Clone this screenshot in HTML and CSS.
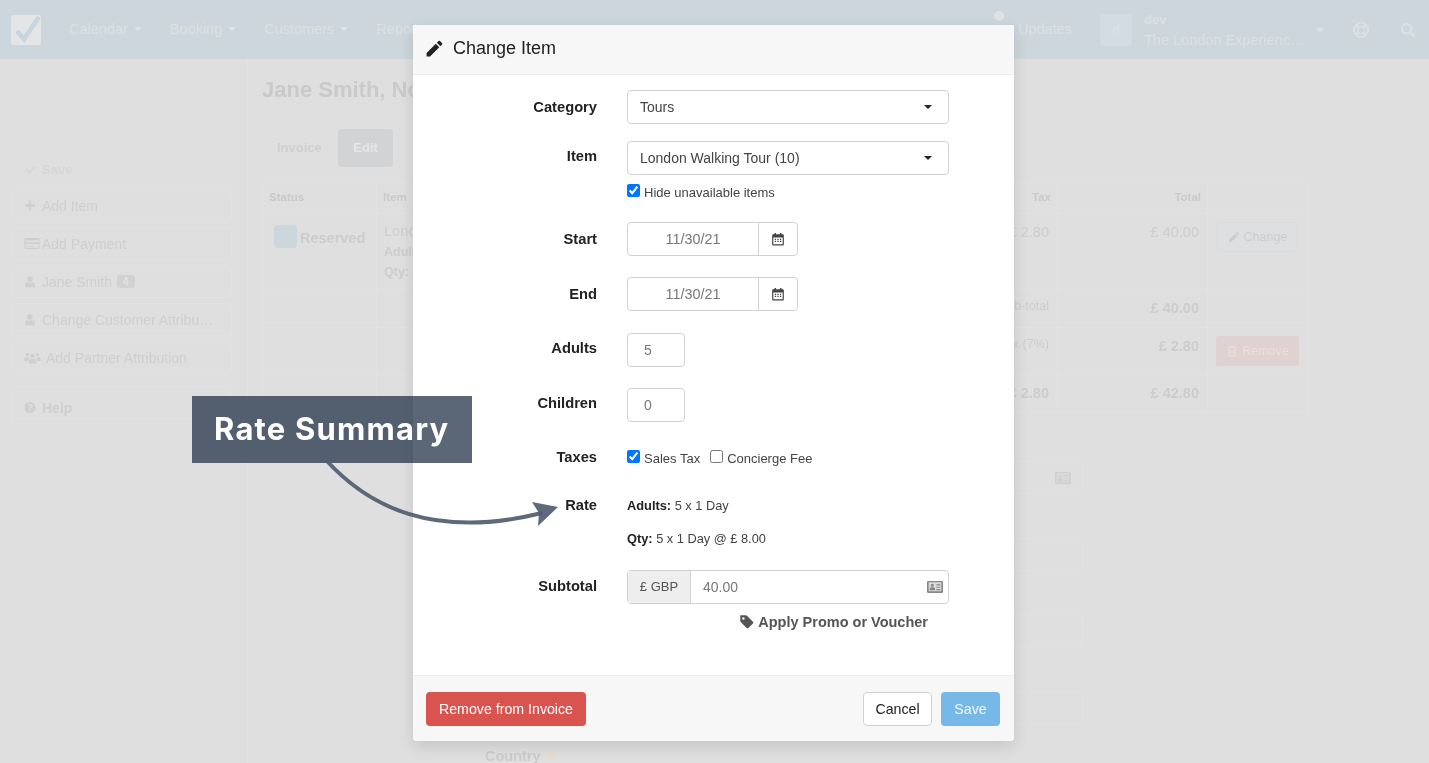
FILE: index.html
```html
<!DOCTYPE html>
<html lang="en">
<head>
    <meta charset="UTF-8">
    <meta name="viewport" content="width=device-width, initial-scale=1.0">
    <title>Change Item</title>
    <link rel="stylesheet" href="styles.css">
</head>
<body>
    <svg class="icon-defs" width="0" height="0">
        <symbol id="i-pencil" viewBox="0 0 24 24"><path d="M2 17.6V22h4.400L18 10.400 13.600 6 2 17.600zM21.500 6.900a1.300 1.300 0 0 0 0-1.800l-2.600-2.600a1.300 1.300 0 0 0-1.800 0L15 4.600 19.400 9l2.100-2.100z"/></symbol>
        <symbol id="i-calendar" viewBox="0 0 24 24"><path d="M6 1.500h2.500V4h7V1.500H18V4h2.500A1.500 1.500 0 0 1 22 5.500v16a1.500 1.500 0 0 1-1.500 1.500h-17A1.500 1.500 0 0 1 2 21.500v-16A1.500 1.500 0 0 1 3.500 4H6zM4 9.500V21h16V9.500zM6.500 11.500h2.200v2H6.500zm4.400 0h2.200v2h-2.200zm4.400 0h2.200v2h-2.200zM6.500 15h2.200v2H6.500zm4.400 0h2.200v2h-2.200zm4.400 0h2.200v2h-2.200z" fill-rule="evenodd"/></symbol>
        <symbol id="i-card" viewBox="0 0 24 20"><rect x="1" y="2" width="22" height="16" fill-opacity="0.3"/><path fill-rule="evenodd" d="M2 1h20a2 2 0 0 1 2 2v14a2 2 0 0 1-2 2H2a2 2 0 0 1-2-2V3a2 2 0 0 1 2-2zm.500 2v13.500h19V3zM8 5a2.300 2.300 0 1 1 0 4.600A2.300 2.300 0 0 1 8 5zM4 15v-2.200C4 11.300 5.500 10.500 8 10.500s4 .8 4 2.300V15zM14 6h6v1.800h-6zm0 3.500h6v1.800h-6zm0 3.500h6v1.800h-6z"/></symbol>
        <symbol id="i-tag" viewBox="0 0 24 24"><path fill-rule="evenodd" d="M2.500 2H11a2.500 2.500 0 0 1 1.800.7l9.500 9.500a2 2 0 0 1 0 2.800l-7.300 7.300a2 2 0 0 1-2.800 0L2.700 12.800A2.500 2.500 0 0 1 2 11V2.500a.5.5 0 0 1 .5-.5zM7 5a2 2 0 1 0 0 4 2 2 0 0 0 0-4z"/></symbol>
        <symbol id="i-check" viewBox="0 0 24 24"><path d="M3 13l3-3 5 5L20 5l3 3-12 12.500z"/></symbol>
        <symbol id="i-plus" viewBox="0 0 24 24"><path d="M9.500 2h5v7.500H22v5h-7.500V22h-5v-7.500H2v-5h7.500z"/></symbol>
        <symbol id="i-payment" viewBox="0 0 28 24"><path fill-rule="evenodd" d="M2.500 2h23A2.500 2.500 0 0 1 28 4.500v15a2.500 2.500 0 0 1-2.500 2.500h-23A2.500 2.500 0 0 1 0 19.500v-15A2.500 2.500 0 0 1 2.500 2zM2 6v3.500h24V6zm0 7v6.500a.5.5 0 0 0 .5.5h23a.5.5 0 0 0 .5-.5V13zm2 3h6v1.500H4zm8 0h3v1.500h-3z"/></symbol>
        <symbol id="i-user" viewBox="0 0 24 24"><path d="M12 1.500a5.500 5.500 0 1 1 0 11 5.500 5.500 0 0 1 0-11zM2 22v-3c0-3.500 3-5.500 6-5.500 1.200.8 2.500 1.200 4 1.200s2.800-.4 4-1.200c3 0 6 2 6 5.500v3a1.500 1.500 0 0 1-1.500 1.500h-17A1.500 1.500 0 0 1 2 22z"/></symbol>
        <symbol id="i-users" viewBox="0 0 30 24"><path d="M15 5a4.200 4.200 0 1 1 0 8.400A4.200 4.200 0 0 1 15 5zM8 22v-2.500c0-3 2.300-5 4.500-5 .8.500 1.600.8 2.500.8s1.700-.3 2.500-.8c2.200 0 4.500 2 4.500 5V22a1 1 0 0 1-1 1H9a1 1 0 0 1-1-1zM5.500 3.500a3 3 0 1 1 0 6 3 3 0 0 1 0-6zm19 0a3 3 0 1 1 0 6 3 3 0 0 1 0-6zM0 16.500v-2c0-2 1.500-3.500 3-3.500 .8.600 1.600.9 2.500.9.700 0 1.300-.2 1.900-.5-.1 1.600.7 2.500 1.600 3.100-1.700.8-2.800 2-3.400 4H1a1 1 0 0 1-1-1zm30 0v-2c0-2-1.500-3.500-3-3.500-.8.600-1.600.9-2.500.9-.7 0-1.300-.2-1.900-.5.100 1.600-.7 2.500-1.600 3.100 1.700.8 2.800 2 3.400 4H29a1 1 0 0 0 1-1z"/></symbol>
        <symbol id="i-help" viewBox="0 0 24 24"><path fill-rule="evenodd" d="M12 1a11 11 0 1 1 0 22 11 11 0 0 1 0-22zM10.300 16.500v3h3.400v-3zM12 4.500c-2.800 0-4.500 1.500-5 3.500l2.700 1.100c.3-1 1-1.700 2.200-1.700 1 0 1.800.6 1.800 1.400 0 .9-.7 1.300-1.500 1.800-1 .6-1.900 1.400-1.900 2.900v.9h3.400v-.6c0-.7.500-1 1.200-1.500 1.100-.7 2.300-1.700 2.300-3.600 0-2.500-2.300-4.200-4.800-4.200z"/></symbol>
        <symbol id="i-trash" viewBox="0 0 24 24"><path fill-rule="evenodd" d="M8 2.500A1.500 1.500 0 0 1 9.500 1h5A1.500 1.500 0 0 1 16 2.500V4h5v2h-1.500v15a2 2 0 0 1-2 2h-11a2 2 0 0 1-2-2V6H3V4h5zM10 3v1h4V3zM6.500 6v15h11V6zM9 8.500h1.500V19H9zm4.500 0H15V19h-1.500z"/></symbol>
    </svg>

    <div class="page">
        <header class="topbar">
            <svg class="logo" viewBox="0 0 32 32">
                <rect x="0" y="1" width="30" height="30" rx="2" fill="#e3e5e6"/>
                <path d="M6 17l7 8L28 3" fill="none" stroke="#c7d5de" stroke-width="4.500"/>
            </svg>
            <nav class="main-nav">
                <a class="nav-link">Calendar <span class="caret"></span></a>
                <a class="nav-link">Booking <span class="caret"></span></a>
                <a class="nav-link">Customers <span class="caret"></span></a>
                <a class="nav-link">Reports <span class="caret"></span></a>
            </nav>
            <div class="top-right">
                <a class="nav-link updates">Updates<span class="updates-dot"></span></a>
                <div class="avatar">d</div>
                <div class="account">
                    <strong>dev</strong>
                    <span>The London Experienc…</span>
                </div>
                <span class="caret account-caret"></span>
                <svg class="lifebuoy" viewBox="0 0 24 24">
                    <circle cx="12" cy="12" r="9.500" stroke-width="2.600"/>
                    <circle cx="12" cy="12" r="4.500" stroke-width="2"/>
                    <path d="M5 5l4 4M19 5l-4 4M5 19l4-4M19 19l-4-4" stroke-width="3.500"/>
                </svg>
                <svg class="search" viewBox="0 0 24 24">
                    <circle cx="10" cy="10" r="7" stroke-width="3.200"/>
                    <path d="M15.500 15.500L22 22" stroke-width="3.800"/>
                </svg>
            </div>
        </header>

        <div class="page-body">
            <aside class="sidebar">
                <div class="side-item side-save"><svg class="side-icon"><use href="#i-check"/></svg>Save</div>
                <div class="side-item boxed"><svg class="side-icon"><use href="#i-plus"/></svg>Add Item</div>
                <div class="side-item boxed"><svg class="side-icon wide"><use href="#i-payment"/></svg>Add Payment</div>
                <div class="side-item boxed"><svg class="side-icon"><use href="#i-user"/></svg>Jane Smith <span class="count">4</span></div>
                <div class="side-item boxed"><svg class="side-icon"><use href="#i-user"/></svg>Change Customer Attribu…</div>
                <div class="side-item boxed"><svg class="side-icon wider"><use href="#i-users"/></svg>Add Partner Attribution</div>
                <div class="side-item boxed side-help"><svg class="side-icon"><use href="#i-help"/></svg>Help</div>
            </aside>

            <main class="content">
                <h1 class="page-title">Jane Smith, No</h1>
                <div class="tabs">
                    <a class="tab">Invoice</a>
                    <a class="tab active">Edit</a>
                </div>

                <table class="items">
                    <colgroup>
                        <col class="col-status"><col class="col-item"><col class="col-tax"><col class="col-total"><col class="col-action">
                    </colgroup>
                    <tr class="head-row">
                        <th>Status</th><th>Item</th><th class="num">Tax</th><th class="num">Total</th><th></th>
                    </tr>
                    <tr class="item-row">
                        <td><div class="status"><span class="status-box"></span><span class="status-text">Reserved</span></div></td>
                        <td class="item-cell">London Walking Tour (10)<br><b>Adults: 5 x 1 Day</b><br><b>Qty: 5 x 1 Day</b></td>
                        <td class="num">£ 2.80</td>
                        <td class="num">£ 40.00</td>
                        <td class="action"><a class="btn-change"><svg class="btn-icon"><use href="#i-pencil"/></svg>Change</a></td>
                    </tr>
                    <tr class="sum-row">
                        <td></td><td></td><td class="num light">Sub-total</td><td class="num"><b>£ 40.00</b></td><td></td>
                    </tr>
                    <tr class="tax-row">
                        <td></td><td></td><td class="num light">Sales Tax (7%)</td><td class="num"><b>£ 2.80</b></td>
                        <td class="action"><a class="btn-remove"><svg class="btn-icon"><use href="#i-trash"/></svg>Remove</a></td>
                    </tr>
                    <tr class="sum-row">
                        <td></td><td></td><td class="num"><b>£ 2.80</b></td><td class="num"><b>£ 42.80</b></td><td></td>
                    </tr>
                </table>

                <div class="detail-form">
                    <div class="ghost-field"><svg class="ghost-card"><use href="#i-card"/></svg></div>
                    <div class="ghost-field"></div>
                    <div class="ghost-field"></div>
                    <div class="ghost-field"></div>
                    <div class="ghost-label">Country <span class="star">★</span></div>
                </div>
            </main>
        </div>
    </div>

    <div class="modal">
        <div class="modal-header">
            <svg class="modal-icon"><use href="#i-pencil"/></svg>
            <h2>Change Item</h2>
        </div>

        <div class="modal-body">
            <div class="form-row row-category">
                <label class="field-label">Category</label>
                <div class="select">Tours<span class="select-caret"></span></div>
            </div>

            <div class="form-row row-item">
                <label class="field-label high">Item</label>
                <div>
                    <div class="select">London Walking Tour (10)<span class="select-caret"></span></div>
                    <label class="check hide-check"><input type="checkbox" checked> Hide unavailable items</label>
                </div>
            </div>

            <div class="form-row row-start">
                <label class="field-label">Start</label>
                <div class="date-group">
                    <div class="date-value">11/30/21</div>
                    <div class="date-addon"><svg class="calendar-icon"><use href="#i-calendar"/></svg></div>
                </div>
            </div>

            <div class="form-row row-end">
                <label class="field-label">End</label>
                <div class="date-group">
                    <div class="date-value">11/30/21</div>
                    <div class="date-addon"><svg class="calendar-icon"><use href="#i-calendar"/></svg></div>
                </div>
            </div>

            <div class="form-row row-adults">
                <label class="field-label high">Adults</label>
                <div class="number-box">5</div>
            </div>

            <div class="form-row row-children">
                <label class="field-label high">Children</label>
                <div class="number-box">0</div>
            </div>

            <div class="form-row row-taxes">
                <label class="field-label short">Taxes</label>
                <div class="check-line">
                    <label class="check"><input type="checkbox" checked> Sales Tax</label>
                    <label class="check"><input type="checkbox"> Concierge Fee</label>
                </div>
            </div>

            <div class="form-row row-rate">
                <label class="field-label short rate-label">Rate</label>
                <div class="rate-lines">
                    <div><b>Adults:</b> 5 x 1 Day</div>
                    <div><b>Qty:</b> 5 x 1 Day @ £ 8.00</div>
                </div>
            </div>

            <div class="form-row row-subtotal">
                <label class="field-label mid">Subtotal</label>
                <div class="money-group">
                    <div class="money-addon">£ GBP</div>
                    <div class="money-value">40.00<svg class="card-icon"><use href="#i-card"/></svg></div>
                </div>
            </div>

            <a class="promo"><svg class="promo-icon"><use href="#i-tag"/></svg>Apply Promo or Voucher</a>
        </div>

        <div class="modal-footer">
            <button class="btn btn-danger">Remove from Invoice</button>
            <div class="footer-right">
                <button class="btn btn-default">Cancel</button>
                <button class="btn btn-save">Save</button>
            </div>
        </div>
    </div>

    <div class="callout">Rate Summary</div>
    <svg class="callout-arrow" viewBox="0 0 1429 763">
        <path d="M326 460C368 506 432 540 542 513" fill="none" stroke="#4f5d70" stroke-opacity="0.92" stroke-width="4"/>
        <path d="M532 502L558 507 538 526 539 513z" fill="#4f5d70" fill-opacity="0.92"/>
    </svg>
</body>
</html>
```

FILE: styles.css
```css
* {
    box-sizing: border-box;
}

html, body {
    height: 100%;
}

body {
    position: relative;
    margin: 0;
    height: 763px;
    overflow: hidden;
    background-color: #dfdfdf;
    font-family: "Liberation Sans", Arial, sans-serif;
    font-size: 14.5px;
    color: #333;
}

.icon-defs {
    position: absolute;
}

svg {
    fill: currentColor;
}

/* everything behind the modal is dimmed */
.page {
    height: 763px;
    filter: blur(0.5px);
    color: #cdcdcd;
}

.topbar {
    display: flex;
    align-items: center;
    height: 59px;
    padding: 0 13px 0 11px;
    background-color: #cdd6dc;
    color: #dbe1e4;
}

.logo {
    width: 32px;
    height: 32px;
    margin-right: 26px;
}

.main-nav {
    display: flex;
    gap: 28px;
    margin-bottom: 2px;
}

.nav-link {
    display: flex;
    align-items: center;
    gap: 6px;
    position: relative;
}

.caret {
    display: inline-block;
    width: 0;
    height: 0;
    border-left: 4px solid transparent;
    border-right: 4px solid transparent;
    border-top: 4px solid #dbe1e4;
}

.top-right {
    display: flex;
    align-items: center;
    margin-left: auto;
}

.updates {
    margin-bottom: 2px;
}

.updates-dot {
    position: absolute;
    left: -24px;
    top: -10px;
    width: 10px;
    height: 10px;
    border-radius: 50%;
    background-color: #e0e3e4;
}

.avatar {
    width: 32px;
    height: 32px;
    margin-left: 28px;
    border-radius: 4px;
    background-color: #d2dce2;
    text-align: center;
    line-height: 32px;
    font-size: 15px;
}

.account {
    display: flex;
    flex-direction: column;
    width: 159px;
    margin-left: 12px;
    line-height: 20px;
    white-space: nowrap;
}

.account strong {
    font-size: 13px;
}

.account-caret {
    margin-left: 13px;
}

.lifebuoy,
.search {
    fill: none;
    stroke: #dbe1e4;
}

.lifebuoy {
    width: 18px;
    height: 18px;
    margin-left: 28px;
}

.search {
    width: 16px;
    height: 16px;
    margin-left: 30px;
}

.page-body {
    display: flex;
}

.sidebar {
    width: 248px;
    height: 704px;
    padding: 94px 15px 0 12px;
    border-right: 1px solid #e2e2e2;
}

.side-item {
    display: flex;
    align-items: center;
    height: 33px;
    margin-bottom: 5px;
    padding-left: 11px;
    font-size: 14px;
    white-space: nowrap;
    color: #cfcfcf;
}

.side-save {
    margin-bottom: 3px;
    padding-left: 12px;
    color: #d6d6d6;
    font-weight: bold;
    font-size: 13px;
}

.boxed {
    border: 1px solid #e2e2e2;
    border-radius: 4px;
}

.side-icon {
    flex: none;
    width: 12px;
    height: 13px;
    margin-right: 6px;
}

.side-icon.wide {
    width: 16px;
    margin-right: 2px;
}

.side-icon.wider {
    width: 17px;
    margin-right: 5px;
}

.count {
    margin-left: 5px;
    padding: 1px 6px;
    border-radius: 3px;
    background-color: #d2d2d2;
    color: #e4e4e4;
    font-size: 10px;
    font-weight: bold;
}

.side-help {
    margin-top: 17px;
    font-weight: bold;
}

.content {
    flex: 1;
    padding: 18px 0 0 14px;
}

.page-title {
    margin: 0;
    font-size: 22px;
    line-height: 26px;
    color: #cacaca;
}

.tabs {
    display: flex;
    margin-top: 26px;
    font-size: 13px;
    font-weight: bold;
}

.tab {
    padding: 0 15px;
    line-height: 38px;
    color: #d0d0d0;
    border-radius: 4px;
}

.tab.active {
    margin-left: 1px;
    padding: 0 15.5px;
    background-color: #d1d3d5;
    color: #e6e6e6;
}

.items {
    width: 1045px;
    margin-top: 15px;
    border-collapse: collapse;
    table-layout: fixed;
}

.col-status { width: 114px; }
.col-item { width: 540px; }
.col-tax { width: 141px; }
.col-total { width: 150px; }
.col-action { width: 100px; }

.items th,
.items td {
    border: 1px solid #e2e2e2;
    padding: 8px 8px 0 7px;
    vertical-align: top;
    white-space: nowrap;
    text-align: left;
    line-height: 17px;
}

.items th {
    font-size: 11.5px;
    color: #cacaca;
    padding: 6px 6px 0;
}

.items .num {
    text-align: right;
}

.items .num b {
    display: inline-block;
    margin-top: 2px;
}

.items .item-row .num {
    padding-top: 10px;
}

.head-row th { height: 31px; }
.item-row td { height: 76px; }
.sum-row td { height: 38px; }
.tax-row td { height: 47px; }

.light {
    font-size: 12.5px;
}

.status {
    display: flex;
    align-items: flex-start;
    gap: 3px;
    margin: 3px 0 0 4px;
    font-weight: bold;
}

.status-box {
    width: 23px;
    height: 23px;
    border-radius: 4px;
    background-color: #cbd6dd;
}

.status-text {
    margin-top: 5px;
}

.items .item-cell {
    line-height: 19.5px;
}

.item-cell b {
    font-size: 12.5px;
}

.items .action {
    padding: 8px 0 0;
    text-align: center;
}

.btn-change,
.btn-remove {
    display: inline-flex;
    align-items: center;
    gap: 4px;
    height: 30px;
    padding: 0 10px;
    border-radius: 3px;
    font-size: 12.5px;
}

.btn-change {
    border: 1px solid #dadbdf;
    background-color: #dedfe1;
    color: #cdcdcd;
}

.btn-remove {
    background-color: #e0d2d1;
    color: #ecdfde;
}

.btn-icon {
    width: 12px;
    height: 12px;
}

.detail-form {
    width: 598px;
    margin: 48px 0 0 223px;
}

.ghost-field {
    display: flex;
    align-items: center;
    justify-content: flex-end;
    height: 33px;
    margin-bottom: 43.5px;
    padding-right: 11px;
    border: 1px solid #e2e2e2;
    border-radius: 4px;
}

.ghost-card {
    width: 16px;
    height: 14px;
    color: #d0d0d0;
}

.ghost-label {
    margin-top: -18px;
    font-weight: bold;
    line-height: 14px;
    color: #cbcbcb;
}

.star {
    color: #e6dccb;
}

/* modal */
.modal {
    position: absolute;
    left: 413px;
    top: 25px;
    display: flex;
    flex-direction: column;
    width: 601px;
    height: 716px;
    background-color: #fff;
    border-radius: 0 0 4px 4px;
    box-shadow: 0 5px 15px rgba(0, 0, 0, 0.12);
}

.modal-header {
    display: flex;
    align-items: center;
    gap: 9px;
    height: 50px;
    padding: 0 0 2px 12px;
    background-color: #f7f7f7;
    border-bottom: 1px solid #eee;
}

.modal-header h2 {
    margin: 0;
    font-size: 18px;
    font-weight: normal;
    color: #222;
}

.modal-icon {
    width: 19px;
    height: 19px;
    color: #222;
}

.modal-body {
    flex: 1;
    padding: 15px 65px 0 0;
}

.form-row {
    display: grid;
    grid-template-columns: 184px 1fr;
    column-gap: 30px;
}

.row-item { margin-top: 17px; }
.row-start { margin-top: 22px; }
.row-end { margin-top: 21px; }
.row-adults { margin-top: 22px; }
.row-children { margin-top: 21px; }
.row-taxes { margin-top: 26px; }
.row-rate { margin-top: 31px; }
.row-subtotal { margin-top: 23px; }

.field-label {
    text-align: right;
    font-weight: bold;
    font-size: 14.7px;
    line-height: 34px;
    color: #222;
}

.field-label.high { line-height: 30px; }
.field-label.mid { line-height: 32px; }
.field-label.short { line-height: 18px; }
.field-label.rate-label { line-height: 14px; }

.select {
    position: relative;
    height: 34px;
    padding-left: 12px;
    border: 1px solid #d2d2d2;
    border-radius: 4px;
    line-height: 32px;
    font-size: 14px;
    color: #444;
}

.select-caret {
    position: absolute;
    right: 16px;
    top: 14px;
    border-left: 4px solid transparent;
    border-right: 4px solid transparent;
    border-top: 4px solid #222;
}

.check {
    display: inline-flex;
    align-items: flex-start;
    gap: 4px;
    font-size: 13px;
    line-height: 19px;
    color: #444;
}

.check input {
    width: 13px;
    height: 13px;
    margin: 1px 0 0;
}

.hide-check {
    display: flex;
    height: 17px;
    margin-top: 8px;
}

.date-group {
    display: flex;
    width: 171px;
    height: 34px;
    border: 1px solid #d2d2d2;
    border-radius: 4px;
    font-size: 14.4px;
    color: #777;
}

.date-value {
    width: 130px;
    text-align: center;
    line-height: 32px;
}

.date-addon {
    flex: 1;
    display: flex;
    align-items: center;
    justify-content: center;
    border-left: 1px solid #d2d2d2;
}

.calendar-icon {
    width: 14px;
    height: 14px;
    color: #444;
}

.number-box {
    width: 58px;
    height: 34px;
    padding-left: 16px;
    border: 1px solid #d2d2d2;
    border-radius: 4px;
    line-height: 32px;
    font-size: 14px;
    color: #777;
}

.check-line {
    display: flex;
    gap: 10px;
    height: 18px;
    margin-top: 1px;
}

.rate-lines {
    display: flex;
    flex-direction: column;
    gap: 16px;
    margin-top: -1px;
    font-size: 12.8px;
    line-height: 17px;
    color: #444;
}

.rate-lines b {
    color: #222;
}

.money-group {
    display: flex;
    width: 322px;
    height: 34px;
    border: 1px solid #d2d2d2;
    border-radius: 4px;
    font-size: 14px;
}

.money-addon {
    width: 63px;
    border-right: 1px solid #d2d2d2;
    background-color: #eee;
    text-align: center;
    line-height: 32px;
    font-size: 13px;
    color: #555;
}

.money-value {
    flex: 1;
    display: flex;
    align-items: center;
    justify-content: space-between;
    padding: 0 5px 0 12px;
    color: #777;
}

.card-icon {
    width: 16px;
    height: 14px;
    color: #888;
}

.promo {
    display: flex;
    align-items: center;
    justify-content: flex-end;
    gap: 4px;
    height: 17px;
    margin: 9px 21px 0 0;
    font-weight: bold;
    color: #555;
}

.promo-icon {
    width: 15px;
    height: 15px;
}

.modal-footer {
    display: flex;
    align-items: flex-start;
    justify-content: space-between;
    height: 66px;
    padding: 16px 14px 0 13px;
    background-color: #f7f7f7;
    border-top: 1px solid #eee;
    border-radius: 0 0 4px 4px;
}

.footer-right {
    display: flex;
    gap: 9px;
}

.btn {
    height: 34px;
    border: 1px solid transparent;
    border-radius: 4px;
    font-family: inherit;
    font-size: 14.2px;
}

.btn-danger {
    width: 160px;
    background-color: #d9534f;
    color: #fff;
}

.btn-default {
    width: 69px;
    background-color: #fff;
    border-color: #d2d2d2;
    color: #222;
}

.btn-save {
    width: 59px;
    background-color: #76b9e8;
    color: #eef6fc;
}

/* annotation on top of the screenshot */
.callout {
    position: absolute;
    left: 192px;
    top: 396px;
    width: 280px;
    height: 67px;
    padding-left: 22px;
    background-color: rgba(36, 52, 74, 0.75);
    color: #fff;
    font-family: Inter, "Open Sans", sans-serif;
    font-size: 31px;
    font-weight: 700;
    letter-spacing: 1.2px;
    line-height: 65px;
}

.callout-arrow {
    position: absolute;
    left: 0;
    top: 0;
    width: 1429px;
    height: 763px;
    pointer-events: none;
}
```
